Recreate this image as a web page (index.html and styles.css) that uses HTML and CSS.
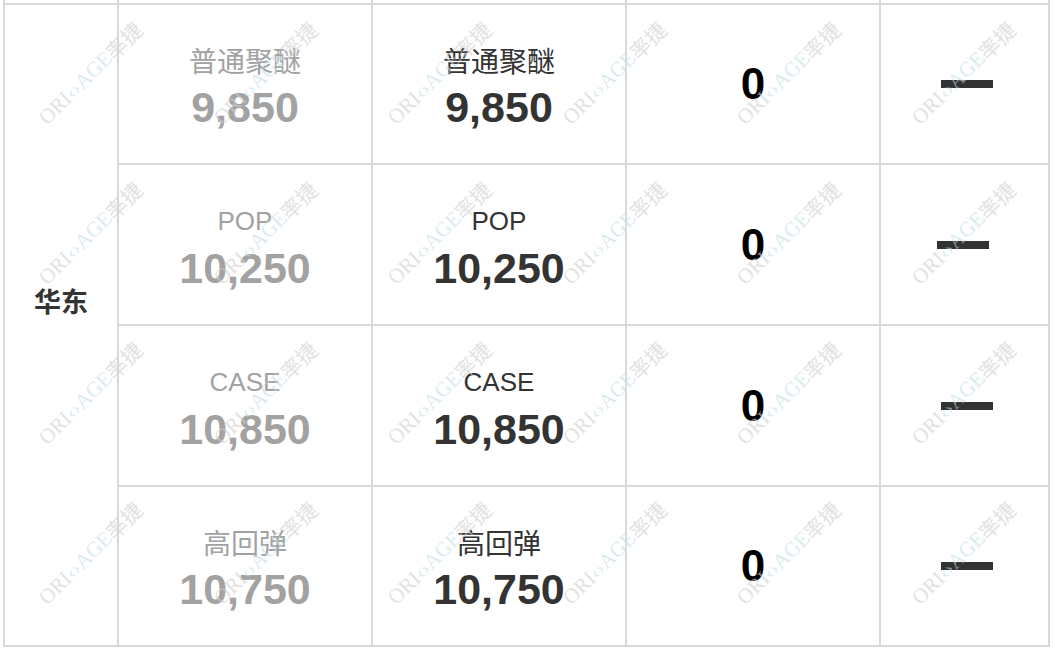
FILE: index.html
```html
<!DOCTYPE html>
<html lang="zh">
<head>
<meta charset="utf-8">
<title>华东价格</title>
<link rel="stylesheet" href="styles.css">
</head>
<body>
<div class="sheet">
  <div class="prev-row">
    <div class="pcell"></div><div class="pcell"></div><div class="pcell"></div><div class="pcell"></div><div class="pcell"></div>
  </div>
  <div class="table">
    <div class="cell region">华东</div>

    <div class="cell item col2"><span class="name cjk">普通聚醚</span><span class="num">9,850</span></div>
    <div class="cell item col3"><span class="name cjk">普通聚醚</span><span class="num">9,850</span></div>
    <div class="cell col4"><span class="zero">0</span></div>
    <div class="cell col5"><span class="dash" aria-label="—"></span></div>

    <div class="cell item col2"><span class="name">POP</span><span class="num">10,250</span></div>
    <div class="cell item col3"><span class="name">POP</span><span class="num">10,250</span></div>
    <div class="cell col4"><span class="zero">0</span></div>
    <div class="cell col5"><span class="dash shift" aria-label="—"></span></div>

    <div class="cell item col2"><span class="name">CASE</span><span class="num">10,850</span></div>
    <div class="cell item col3"><span class="name">CASE</span><span class="num">10,850</span></div>
    <div class="cell col4"><span class="zero">0</span></div>
    <div class="cell col5"><span class="dash" aria-label="—"></span></div>

    <div class="cell item col2"><span class="name cjk">高回弹</span><span class="num">10,750</span></div>
    <div class="cell item col3"><span class="name cjk">高回弹</span><span class="num">10,750</span></div>
    <div class="cell col4"><span class="zero">0</span></div>
    <div class="cell col5"><span class="dash" aria-label="—"></span></div>
  </div>

  <div class="watermarks" aria-hidden="true">
    <span class="wm"><i class="g">ORI</i><i class="b">‹›AGE</i><i class="g">率捷</i></span>
    <span class="wm"><i class="g">ORI</i><i class="b">‹›AGE</i><i class="g">率捷</i></span>
    <span class="wm"><i class="g">ORI</i><i class="b">‹›AGE</i><i class="g">率捷</i></span>
    <span class="wm"><i class="g">ORI</i><i class="b">‹›AGE</i><i class="g">率捷</i></span>
    <span class="wm"><i class="g">ORI</i><i class="b">‹›AGE</i><i class="g">率捷</i></span>
    <span class="wm"><i class="g">ORI</i><i class="b">‹›AGE</i><i class="g">率捷</i></span>
    <span class="wm"><i class="g">ORI</i><i class="b">‹›AGE</i><i class="g">率捷</i></span>
    <span class="wm"><i class="g">ORI</i><i class="b">‹›AGE</i><i class="g">率捷</i></span>
    <span class="wm"><i class="g">ORI</i><i class="b">‹›AGE</i><i class="g">率捷</i></span>
    <span class="wm"><i class="g">ORI</i><i class="b">‹›AGE</i><i class="g">率捷</i></span>
    <span class="wm"><i class="g">ORI</i><i class="b">‹›AGE</i><i class="g">率捷</i></span>
    <span class="wm"><i class="g">ORI</i><i class="b">‹›AGE</i><i class="g">率捷</i></span>
    <span class="wm"><i class="g">ORI</i><i class="b">‹›AGE</i><i class="g">率捷</i></span>
    <span class="wm"><i class="g">ORI</i><i class="b">‹›AGE</i><i class="g">率捷</i></span>
    <span class="wm"><i class="g">ORI</i><i class="b">‹›AGE</i><i class="g">率捷</i></span>
    <span class="wm"><i class="g">ORI</i><i class="b">‹›AGE</i><i class="g">率捷</i></span>
    <span class="wm"><i class="g">ORI</i><i class="b">‹›AGE</i><i class="g">率捷</i></span>
    <span class="wm"><i class="g">ORI</i><i class="b">‹›AGE</i><i class="g">率捷</i></span>
    <span class="wm"><i class="g">ORI</i><i class="b">‹›AGE</i><i class="g">率捷</i></span>
    <span class="wm"><i class="g">ORI</i><i class="b">‹›AGE</i><i class="g">率捷</i></span>
    <span class="wm"><i class="g">ORI</i><i class="b">‹›AGE</i><i class="g">率捷</i></span>
    <span class="wm"><i class="g">ORI</i><i class="b">‹›AGE</i><i class="g">率捷</i></span>
    <span class="wm"><i class="g">ORI</i><i class="b">‹›AGE</i><i class="g">率捷</i></span>
    <span class="wm"><i class="g">ORI</i><i class="b">‹›AGE</i><i class="g">率捷</i></span>
  </div>
</div>
</body>
</html>
```

FILE: styles.css
```css
html, body {
  margin: 0;
  padding: 0;
  background: #ffffff;
}

.sheet {
  position: relative;
  width: 1055px;
  height: 652px;
  overflow: hidden;
  font-family: "Liberation Sans", "Noto Sans CJK SC", sans-serif;
}

.prev-row {
  display: grid;
  grid-template-columns: 114px 254px 254px 254px 169px;
  height: 3px;
  margin-left: 3px;
  border-left: 2px solid #d9d9d9;
  width: 1045px;
}

.pcell {
  border-right: 2px solid #d9d9d9;
}

.table {
  display: grid;
  grid-template-columns: 114px 254px 254px 254px 169px;
  grid-template-rows: 160px 161px 161px 160px;
  width: 1045px;
  margin-left: 3px;
  border-left: 2px solid #d9d9d9;
  border-top: 2px solid #d9d9d9;
}

.cell {
  border-right: 2px solid #d9d9d9;
  border-bottom: 2px solid #d9d9d9;
  display: flex;
  flex-direction: column;
  align-items: center;
  justify-content: center;
  box-sizing: border-box;
}

.item {
  padding-top: 8px;
}

.region {
  grid-row: 1 / span 4;
  grid-column: 1;
  font-family: "Noto Sans CJK SC", sans-serif;
  font-weight: 700;
  font-size: 27px;
  color: #333333;
  padding-bottom: 50px;
}

.name {
  font-size: 26px;
  line-height: 30px;
}

.name.cjk {
  font-family: "Noto Sans CJK SC", sans-serif;
  font-size: 28px;
}

.num {
  font-size: 43px;
  line-height: 48px;
  font-weight: 700;
  margin-top: 8px;
}

.col2 {
  color: #a2a2a2;
}

.col3 {
  color: #333333;
}

.zero {
  font-size: 44px;
  font-weight: 700;
  color: #000000;
  line-height: 48px;
}

.dash {
  display: block;
  width: 52px;
  height: 8px;
  background: #333333;
  margin-left: 4px;
}

.dash.shift {
  margin-left: -4px;
}

.watermarks {
  position: absolute;
  left: 3px;
  top: -7px;
  display: grid;
  grid-template-columns: repeat(6, 174.5px);
  grid-template-rows: repeat(4, 160px);
  pointer-events: none;
}

.wm {
  display: flex;
  align-items: center;
  justify-content: center;
  transform: rotate(-45deg);
  font-family: "Liberation Serif", "Noto Sans CJK SC", serif;
  font-size: 21px;
  white-space: nowrap;
  opacity: 0.6;
}

.wm i {
  font-style: normal;
}

.wm .g {
  color: #cfcfcf;
}

.wm .b {
  color: #c4dfe8;
}
```
